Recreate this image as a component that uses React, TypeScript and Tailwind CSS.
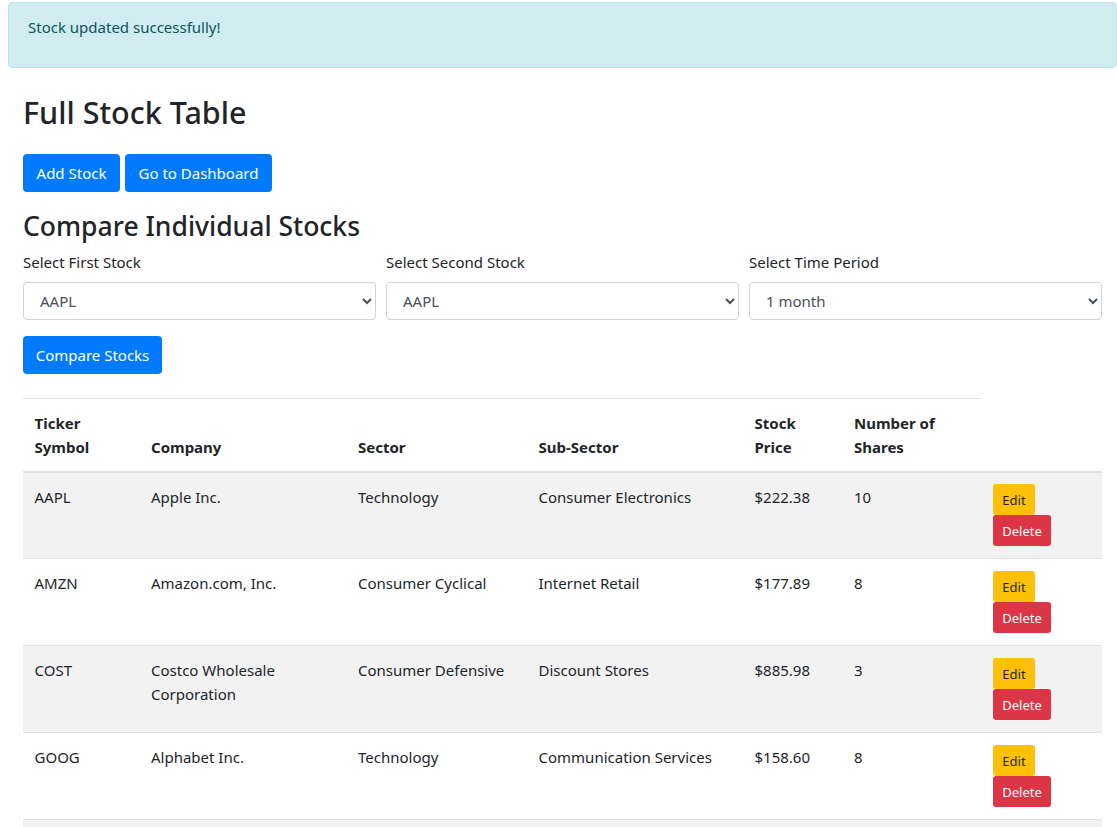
const rows = [
  ["AAPL", "Apple Inc.", "Technology", "Consumer Electronics", "$222.38", "10"],
  ["AMZN", "Amazon.com, Inc.", "Consumer Cyclical", "Internet Retail", "$177.89", "8"],
  ["COST", "Costco Wholesale Corporation", "Consumer Defensive", "Discount Stores", "$885.98", "3"],
  ["GOOG", "Alphabet Inc.", "Technology", "Communication Services", "$158.60", "8"],
];
const cols = "grid grid-cols-[116px_207px_180.5px_216px_99.5px_139px_142px]";
const Sel = ({ label, value }: { label: string; value: string }) => (
  <div className="flex-1">
    <div className="h-6 mb-2 leading-6">{label}</div>
    <select defaultValue={value} className="w-full h-[38px] pl-3 pr-1 border border-[#ced4da] rounded bg-white text-[#495057]">
      <option>{value}</option>
    </select>
  </div>
);
export default function App() {
  return (
    <div className="h-[827px] overflow-hidden bg-white text-[#212529] text-[15px] font-['Noto_Sans',sans-serif]">
      <div className="mt-[2px] ml-2 h-[66px] pl-[19px] pr-5 py-3 bg-[#d1ecf1] border border-[#bee5eb] rounded text-[#0c5460] leading-6">Stock updated successfully!</div>
      <div className="pl-[23px] pr-[15px]">
        <h1 className="mt-[25px] text-[30.5px] font-medium leading-[38px]">Full Stock Table</h1>
        <div className="mt-[23px] flex gap-[5px]">
          <button className="h-[38px] w-[97px] bg-[#007bff] text-white rounded">Add Stock</button>
          <button className="h-[38px] w-[147px] bg-[#007bff] text-white rounded">Go to Dashboard</button>
        </div>
        <h2 className="mt-[17px] text-[26.5px] font-medium leading-[34px]">Compare Individual Stocks</h2>
        <div className="mt-[7px] flex gap-[10px]">
          <Sel label="Select First Stock" value="AAPL" />
          <Sel label="Select Second Stock" value="AAPL" />
          <Sel label="Select Time Period" value="1 month" />
        </div>
        <button className="mt-4 h-[38px] w-[139px] bg-[#007bff] text-white rounded">Compare Stocks</button>
        <div className="mt-6 w-[958px] border-t border-[#dee2e6]" />
        <div className={`${cols} h-[74px] border-b-2 border-[#dee2e6] font-bold leading-6`}>
          {["Ticker Symbol", "Company", "Sector", "Sub-Sector", "Stock Price", "Number of Shares", ""].map((h, i) => (
            <div key={i} className={`${i === 0 ? "pl-[11.5px] pr-3" : "px-3"} pb-[12px] flex items-end`}>{h}</div>
          ))}
        </div>
        {rows.map((r, idx) => (
          <div key={r[0]} className={`${cols} ${idx === 0 ? "h-[86px]" : "h-[87px]"} border-b border-[#dee2e6] leading-6 ${idx % 2 === 0 ? "bg-[#f2f2f2]" : ""}`}>
            {r.map((c, i) => (
              <div key={i} className={`${i === 0 ? "pl-[11.5px] pr-3" : "px-3"} pt-3`}>{c}</div>
            ))}
            <div className={`px-3 ${idx === 0 ? "pt-[11px]" : "pt-3"} flex flex-col items-start`}>
              <button className="h-[31px] w-[42px] text-[13px] bg-[#ffc107] text-[#212529] rounded-[3px]">Edit</button>
              <button className="h-[31px] w-[58px] text-[13px] bg-[#dc3545] text-white rounded-[3px]">Delete</button>
            </div>
          </div>
        ))}
        <div className="h-10 bg-[#f2f2f2]" />
      </div>
    </div>
  );
}
